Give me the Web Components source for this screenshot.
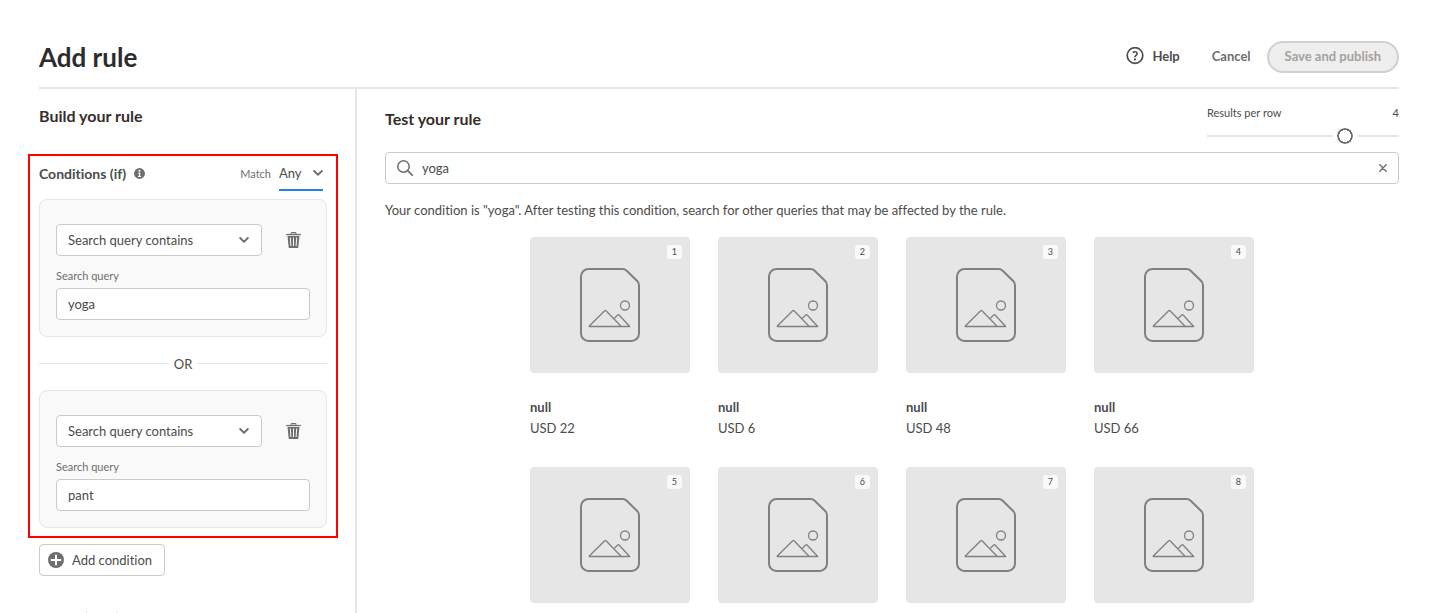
<!DOCTYPE html>
<html lang="en">
<head>
<meta charset="utf-8">
<meta name="viewport" content="width=device-width, initial-scale=1">
<title>Add rule</title>
<style>
  html { scrollbar-width: none; }
  body {
    margin: 0;
    background: #fff;
    color: #4b4b4b;
    font: 13px/20px Lato, "Noto Sans", sans-serif;
    font-variant-ligatures: none;
    --line: #e6e6e6;
    --field-line: #cacaca;
    --icon: #6e6e6e;
    --strong: #2c2c2c;
    --muted: #6e6e6e;
    --accent: #2680eb;
    --highlight: #fe0000;
  }
</style>
</head>
<body>
<rule-editor>
  <rule-header slot="header" heading="Add rule"></rule-header>
  <rule-builder slot="builder">
    <condition-card value="yoga"></condition-card>
    <or-divider>OR</or-divider>
    <condition-card value="pant"></condition-card>
  </rule-builder>
  <rule-tester slot="tester">
    <product-tile rank="1" price="USD 22">null</product-tile>
    <product-tile rank="2" price="USD 6">null</product-tile>
    <product-tile rank="3" price="USD 48">null</product-tile>
    <product-tile rank="4" price="USD 66">null</product-tile>
    <product-tile rank="5"></product-tile>
    <product-tile rank="6"></product-tile>
    <product-tile rank="7"></product-tile>
    <product-tile rank="8"></product-tile>
  </rule-tester>
</rule-editor>

<script>
  const BASE = `
    *, *::before, *::after { box-sizing: border-box; }
    h1, h2, h3, p { margin: 0; }
    button, input, select { font: inherit; font-variant-ligatures: none; color: inherit; margin: 0; outline: none; }
    button { cursor: pointer; }
  `;

  class BaseElement extends HTMLElement {
    constructor() {
      super();
      this.attachShadow({ mode: 'open' });
    }
    connectedCallback() {
      this.shadowRoot.innerHTML = `<style>${BASE}${this.styles()}</style>${this.markup()}`;
    }
  }

  const ICONS = {
    chevron: [10, 6, '<path d="M1.200 1l3.800 3.800L8.800 1" fill="none" stroke="currentColor" stroke-width="1.900" stroke-linecap="round" stroke-linejoin="round"/>'],
    info: [11, 11, '<circle cx="5.500" cy="5.500" r="5.400" fill="currentColor"/><circle cx="5.500" cy="2.700" r="1" fill="#fff"/><path d="M4.200 4.600h2v3.300h.9v1H4v-1h.9V5.600h-.7z" fill="#fff"/>'],
    trash: [16, 16, '<path d="M5.100 1.800V1.300a.7.7 0 0 1 .7-.7h3.400a.7.7 0 0 1 .7.7v.5" fill="none" stroke="currentColor" stroke-width="1.200"/><path d="M.2 1.900h14.600v1.300H.2z" fill="currentColor"/><path fill-rule="evenodd" fill="currentColor" d="M1.500 4h12l-1.200 11.400a.7.7 0 0 1-.7.600H3.400a.7.7 0 0 1-.7-.6zM3.800 5.500l.6 8.500h1L4.800 5.500zM7 5.500V14h1V5.500zM10.200 5.500L9.600 14h1l.6-8.500z"/>'],
    add: [16, 16, '<circle cx="8" cy="8" r="8" fill="currentColor"/><path d="M8 3.500v9M3.500 8h9" stroke="#fff" stroke-width="2" stroke-linecap="round"/>'],
    help: [18, 18, '<circle cx="9" cy="8.500" r="7.800" fill="none" stroke="currentColor" stroke-width="1.700"/><path d="M6.800 5.600c.5-.5 1.200-.8 2-.8 1.300 0 2.300.7 2.300 1.900 0 1.600-2.200 1.900-2.200 3.500" fill="none" stroke="currentColor" stroke-width="1.600"/><circle cx="8.900" cy="12.400" r="1.100" fill="currentColor"/>'],
    search: [16, 16, '<circle cx="6.500" cy="6.500" r="5.700" fill="none" stroke="currentColor" stroke-width="1.500"/><path d="M10.700 10.700l4.500 4.500" stroke="currentColor" stroke-width="1.700" stroke-linecap="round"/>'],
    cross: [8, 8, '<path d="M.8.8l6.400 6.400M7.200.8L.8 7.200" stroke="currentColor" stroke-width="1.400" stroke-linecap="round"/>'],
    picture: [60, 74, '<g fill="none" stroke="#808080" stroke-linejoin="round"><path stroke-width="2" d="M8.500 1H42.500a6 6 0 0 1 4.200 1.700L57.200 13a6 6 0 0 1 1.800 4.200V65.500a7.500 7.500 0 0 1-7.500 7.500H8.500A7.500 7.500 0 0 1 1 65.500V8.500A7.500 7.500 0 0 1 8.500 1z"/><g stroke-width="1.300"><circle cx="45" cy="37.500" r="4.500"/><path d="M8.800 58.500L24.700 42.700a.9.9 0 0 1 1.300 0L41.300 58.500M34 50.600l3.700-3.600a1 1 0 0 1 1.400 0L49.700 58.500H8.800"/></g></g>']
  };

  customElements.define('ui-icon', class extends BaseElement {
    styles() { return `:host { display: inline-flex; flex: none; } svg { display: block; }`; }
    markup() {
      const [w, h, body] = ICONS[this.getAttribute('name')];
      return `<svg width="${w}" height="${h}" viewBox="0 0 ${w} ${h}" aria-hidden="true">${body}</svg>`;
    }
  });

  customElements.define('rule-editor', class extends BaseElement {
    styles() { return `
      :host { display: flex; flex-direction: column; min-height: 100vh; padding: 0 38px 0 39px; box-sizing: border-box; }
      .columns { display: grid; grid-template-columns: 318px minmax(0, 1fr); flex: 1; }
    `; }
    markup() { return `
      <slot name="header"></slot>
      <div class="columns"><slot name="builder"></slot><slot name="tester"></slot></div>
    `; }
  });

  customElements.define('rule-header', class extends BaseElement {
    styles() { return `
      :host { display: block; border-bottom: 2px solid var(--line); }
      header { display: flex; align-items: center; padding: 41px 0 14px; }
      h1 { flex: 1; font-size: 26px; line-height: 32px; font-weight: 700; color: var(--strong); }
      button { height: 32px; border: 0; background: none; padding: 0 0 2px; font-weight: 700; }
      .help { display: flex; align-items: center; gap: 8px; margin-right: 32px; }
      .cancel { margin-right: 16px; color: var(--muted); }
      .save { padding: 0 16px 2px; border: 2px solid #d0d0d0; border-radius: 16px; background: #eee; color: #a5a19d; }
    `; }
    markup() { return `
      <header>
        <h1>${this.getAttribute('heading')}</h1>
        <button class="help" type="button"><ui-icon name="help"></ui-icon>Help</button>
        <button class="cancel" type="button">Cancel</button>
        <button class="save" type="button" disabled>Save and publish</button>
      </header>
    `; }
  });

  customElements.define('rule-builder', class extends BaseElement {
    styles() { return `
      :host { display: block; border-right: 2px solid var(--line); padding: 15px 28px 32px 0; }
      h2 { font-size: 16px; line-height: 24px; color: #362e2a; }
      h3 { font-size: 14px; line-height: 20px; }
      .conditions { margin: 26px -11px 6px; padding: 0 9px 8px; border: 2px solid var(--highlight); }
      .bar { display: flex; align-items: center; height: 35px; margin-bottom: 8px; padding-right: 4px; }
      .bar ui-icon[name=info] { margin-left: 8px; color: var(--icon); }
      .bar label { margin-left: auto; font-size: 11px; color: var(--muted); }
      .match { position: relative; width: 44px; height: 35px; margin-left: 8px; border-bottom: 2px solid var(--accent); }
      .match select { appearance: none; width: 100%; height: 100%; padding: 0; border: 0; background: none; }
      .match ui-icon { position: absolute; right: 0; top: 14px; color: var(--icon); pointer-events: none; }
      .add { display: flex; align-items: center; gap: 8px; height: 32px; padding: 0 12px 0 8px; border: 1px solid var(--field-line); border-radius: 4px; background: #fff; }
      .add ui-icon { color: var(--icon); }
      .events { margin-top: 32px; }
    `; }
    markup() { return `
      <h2>Build your rule</h2>
      <section class="conditions">
        <div class="bar">
          <h3>Conditions (if)</h3><ui-icon name="info"></ui-icon>
          <label for="match">Match</label>
          <div class="match">
            <select id="match"><option>Any</option><option>All</option></select>
            <ui-icon name="chevron"></ui-icon>
          </div>
        </div>
        <slot></slot>
      </section>
      <button class="add" type="button"><ui-icon name="add"></ui-icon>Add condition</button>
      <h3 class="events">Events (then)</h3>
    `; }
  });

  customElements.define('or-divider', class extends BaseElement {
    styles() { return `
      :host { display: flex; align-items: center; gap: 5px; height: 53px; }
      :host::before, :host::after { content: ""; flex: 1; height: 1px; background: var(--line); }
    `; }
    markup() { return `<span><slot></slot></span>`; }
  });

  customElements.define('condition-card', class extends BaseElement {
    styles() { return `
      :host { display: block; box-sizing: border-box; padding: 24px 16px 16px; border: 1px solid var(--line); border-radius: 8px; background: #f9f9f9; }
      .row { display: flex; align-items: center; gap: 16px; }
      .pick { position: relative; width: 206px; }
      select, input { display: block; width: 100%; height: 32px; padding: 0 11px; border: 1px solid var(--field-line); border-radius: 4px; background: #fff; }
      select { appearance: none; }
      .pick ui-icon { position: absolute; right: 13px; top: 13px; color: var(--icon); pointer-events: none; }
      .remove { display: grid; place-items: center; width: 32px; height: 32px; padding: 0; border: 0; background: none; color: var(--icon); }
      label { display: block; margin: 12px 0 4px; font-size: 11px; line-height: 16px; color: var(--muted); }
    `; }
    markup() { return `
      <div class="row">
        <div class="pick">
          <select aria-label="Condition type"><option>Search query contains</option><option>Search query is</option></select>
          <ui-icon name="chevron"></ui-icon>
        </div>
        <button class="remove" type="button" aria-label="Remove condition"><ui-icon name="trash"></ui-icon></button>
      </div>
      <label for="query">Search query</label>
      <input id="query" type="text" value="${this.getAttribute('value')}">
    `; }
  });

  customElements.define('row-slider', class extends BaseElement {
    styles() { return `
      :host { display: block; width: 192px; }
      .labels { display: flex; justify-content: space-between; font-size: 11px; line-height: 16px; }
      input { appearance: none; display: block; width: 100%; height: 24px; margin-top: 3px; background: none; }
      input::-webkit-slider-runnable-track { height: 24px; background: linear-gradient(var(--line), var(--line)) center / 100% 2px no-repeat; }
      input::-webkit-slider-thumb { appearance: none; width: 24px; height: 24px; border: 4px solid #fff; border-radius: 50%;
        background: radial-gradient(circle, #fff 6px, #6e6e6e 6px) padding-box; }
    `; }
    markup() { return `
      <div class="labels"><label for="rows">Results per row</label><output for="rows">4</output></div>
      <input id="rows" type="range" min="1" max="5" value="4">
    `; }
  });

  customElements.define('rule-tester', class extends BaseElement {
    styles() { return `
      :host { display: block; padding: 16px 0 0 28px; }
      .top { display: flex; justify-content: space-between; align-items: flex-start; height: 47px; }
      h2 { font-size: 16px; line-height: 28px; color: #362e2a; }
      .search { display: flex; align-items: center; height: 32px; padding: 0 11px; border: 1px solid var(--field-line); border-radius: 4px; color: var(--icon); }
      .search input { flex: 1; min-width: 0; height: 28px; padding: 0 9px; border: 0; background: none; color: #4b4b4b; }
      .clear { display: grid; place-items: center; width: 8px; height: 24px; padding: 0; border: 0; background: none; color: var(--icon); }
      p { margin: 16px 0 17px; }
      .grid { display: grid; grid-template-columns: repeat(4, 160px); justify-content: center; gap: 28px; }
    `; }
    markup() { return `
      <div class="top"><h2>Test your rule</h2><row-slider></row-slider></div>
      <div class="search">
        <ui-icon name="search"></ui-icon>
        <input type="text" aria-label="Test query" value="yoga">
        <button class="clear" type="button" aria-label="Clear"><ui-icon name="cross"></ui-icon></button>
      </div>
      <p>Your condition is "yoga". After testing this condition, search for other queries that may be affected by the rule.</p>
      <div class="grid"><slot></slot></div>
    `; }
  });

  customElements.define('product-tile', class extends BaseElement {
    styles() { return `
      :host { display: block; line-height: 21px; }
      .picture { position: relative; display: grid; place-items: center; height: 136px; border-radius: 4px; background: #e6e6e6; }
      .rank { position: absolute; top: 8px; right: 8px; padding: 0 5px; border-radius: 3px; background: #f9f9f9; font-size: 9px; line-height: 14px; }
      .name { margin-top: 24px; font-weight: 700; }
    `; }
    markup() {
      const price = this.getAttribute('price');
      return `
      <div class="picture"><ui-icon name="picture"></ui-icon><span class="rank">${this.getAttribute('rank')}</span></div>
      ${price ? `<div class="name"><slot></slot></div><div>${price}</div>` : ''}
    `; }
  });
</script>
</body>
</html>
